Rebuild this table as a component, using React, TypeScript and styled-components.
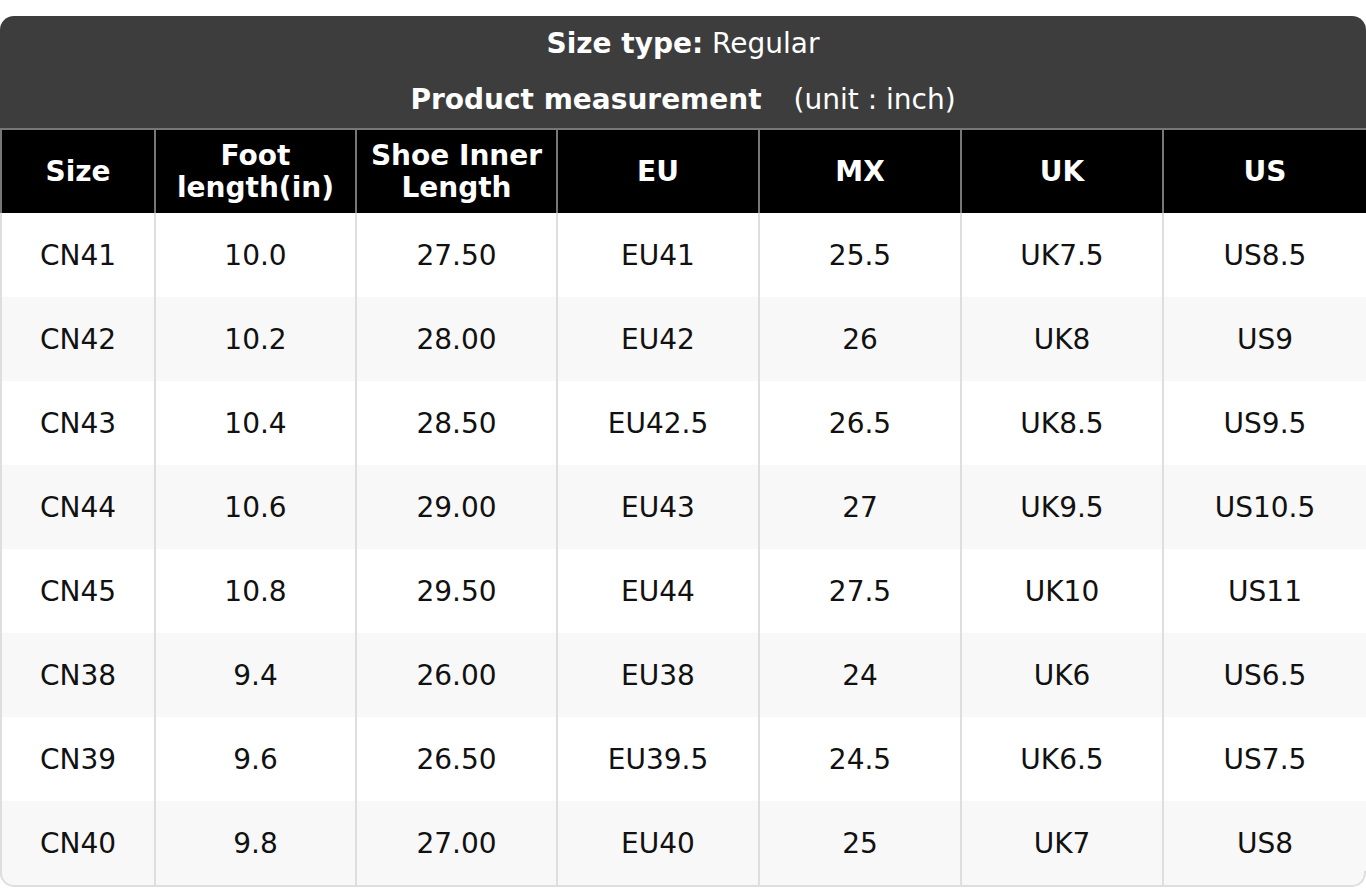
import React from "react";
import styled, { createGlobalStyle } from "styled-components";

const Global = createGlobalStyle`
  html, body { margin: 0; padding: 0; background: #ffffff; }
  body { font-family: "DejaVu Sans", "Liberation Sans", sans-serif; }
`;

const Page = styled.div`
  padding-top: 16px;
  width: 1366px;
`;

const Card = styled.div`
  border-radius: 14px;
  overflow: hidden;
  background: #ffffff;
`;

const Banner = styled.div`
  background: #3d3d3d;
  color: #ffffff;
  display: flex;
  flex-direction: column;
  align-items: center;
`;

const BannerLine = styled.div`
  height: 56px;
  display: flex;
  align-items: center;
  font-size: 28px;
  white-space: pre;
  transform: translateY(-1px);
`;

const Strong = styled.span`
  font-weight: bold;
`;

const Unit = styled.span`
  margin-left: 32px;
`;

const Table = styled.table`
  width: 1366px;
  border-collapse: collapse;
  table-layout: fixed;
  font-size: 28px;
`;

const HeadCell = styled.th`
  background: #000000;
  color: #ffffff;
  font-weight: bold;
  height: 83px;
  padding: 0 4px;
  border: 2px solid #777777;
  border-bottom: none;
  line-height: 32px;
  text-align: center;
  vertical-align: middle;
`;

const Row = styled.tr<{ $alt: boolean }>`
  background: ${(p) => (p.$alt ? "#f8f8f8" : "#ffffff")};
`;

const Cell = styled.td`
  height: 84px;
  padding: 0;
  border: 2px solid #dedede;
  border-top: none;
  border-bottom: none;
  text-align: center;
  vertical-align: middle;
  color: #111111;
`;

const LastWrap = styled.div`
  border-bottom: 2px solid #dedede;
  border-left: 2px solid #dedede;
  border-right: 2px solid #dedede;
  border-radius: 0 0 14px 14px;
  height: 0;
  margin-top: -14px;
  padding-top: 14px;
`;

const widths = [154, 201, 201, 202, 202, 202, 204];

const headers: React.ReactNode[] = [
  "Size",
  <>Foot<br />length(in)</>,
  <>Shoe Inner<br />Length</>,
  "EU",
  "MX",
  "UK",
  "US",
];

const rows: string[][] = [
  ["CN41", "10.0", "27.50", "EU41", "25.5", "UK7.5", "US8.5"],
  ["CN42", "10.2", "28.00", "EU42", "26", "UK8", "US9"],
  ["CN43", "10.4", "28.50", "EU42.5", "26.5", "UK8.5", "US9.5"],
  ["CN44", "10.6", "29.00", "EU43", "27", "UK9.5", "US10.5"],
  ["CN45", "10.8", "29.50", "EU44", "27.5", "UK10", "US11"],
  ["CN38", "9.4", "26.00", "EU38", "24", "UK6", "US6.5"],
  ["CN39", "9.6", "26.50", "EU39.5", "24.5", "UK6.5", "US7.5"],
  ["CN40", "9.8", "27.00", "EU40", "25", "UK7", "US8"],
];

export default function App() {
  return (
    <Page>
      <Global />
      <Card>
        <Banner>
          <BannerLine>
            <Strong>Size type:</Strong> Regular
          </BannerLine>
          <BannerLine>
            <Strong>Product measurement</Strong>
            <Unit>(unit : inch)</Unit>
          </BannerLine>
        </Banner>
        <Table>
          <colgroup>
            {widths.map((w, i) => (
              <col key={i} style={{ width: w }} />
            ))}
          </colgroup>
          <thead>
            <tr>
              {headers.map((h, i) => (
                <HeadCell key={i}>{h}</HeadCell>
              ))}
            </tr>
          </thead>
          <tbody>
            {rows.map((r, i) => (
              <Row key={i} $alt={i % 2 === 1}>
                {r.map((c, j) => (
                  <Cell key={j}>{c}</Cell>
                ))}
              </Row>
            ))}
          </tbody>
        </Table>
        <LastWrap />
      </Card>
    </Page>
  );
}
